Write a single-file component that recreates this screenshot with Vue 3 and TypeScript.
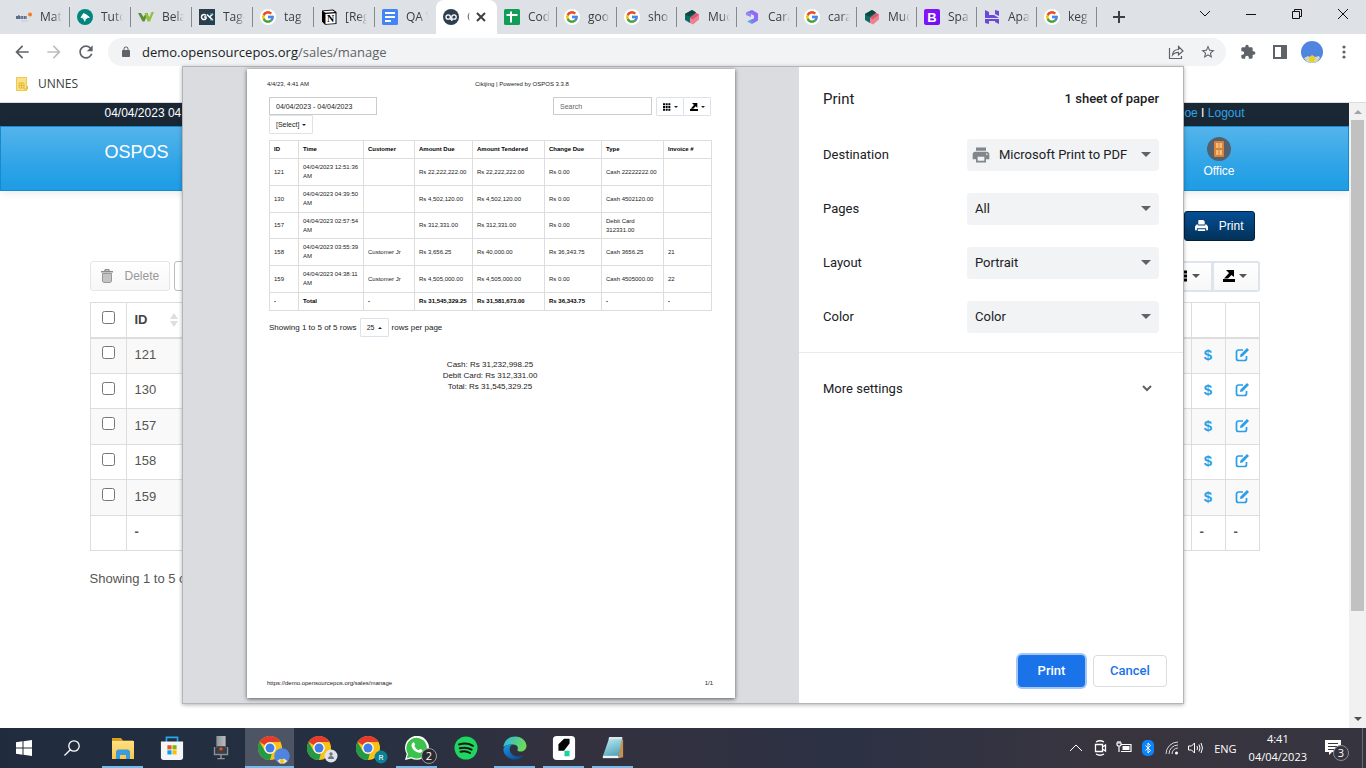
<script setup lang="ts">
import { ref } from 'vue'

interface Tab {
  icon: string
  title: string
  active?: boolean
}

interface Letter {
  text: string
  x: number
  y: number
  size: number
  font: string
  fill: string
  weight: number
}

interface Sale {
  id: number
  time: string
  customer: string
  due: string
  tendered: string
  change: string
  type: string
  invoice: string
}

interface App {
  icon: string
  name: string
  open: boolean
  current?: boolean
  badge?: string
}

const tabs: Tab[] = [
  { icon: 'f-elearn', title: 'Mat' },
  { icon: 'f-tuto', title: 'Tuto' },
  { icon: 'f-w', title: 'Bela' },
  { icon: 'f-gk', title: 'Tag-' },
  { icon: 'f-google', title: 'tag s' },
  { icon: 'f-notion', title: '[Reg' },
  { icon: 'f-docs', title: 'QA W' },
  { icon: 'f-op', title: 'C', active: true },
  { icon: 'f-sheets', title: 'Cod' },
  { icon: 'f-google', title: 'goo' },
  { icon: 'f-google', title: 'sho' },
  { icon: 'f-cubes', title: 'Mud' },
  { icon: 'f-swirl', title: 'Cara' },
  { icon: 'f-google', title: 'cara' },
  { icon: 'f-cubes', title: 'Mud' },
  { icon: 'f-boot', title: 'Spa' },
  { icon: 'f-host', title: 'Apa' },
  { icon: 'f-google', title: 'keg' },
]

const letters: Record<string, Letter> = {
  'f-notion': { text: 'N', x: 9.500, y: 13, size: 10, font: 'Liberation Serif', fill: '#000', weight: 700 },
  'f-boot': { text: 'B', x: 8, y: 12.500, size: 13, font: 'Liberation Sans', fill: '#fff', weight: 700 },
  'b-r': { text: 'R', x: 9, y: 12, size: 8, font: 'Roboto', fill: '#fff', weight: 400 },
  'b-two': { text: '2', x: 8, y: 12, size: 11, font: 'Open Sans', fill: '#fff', weight: 400 },
}

const sales: Sale[] = [
  { id: 121, time: '04/04/2023 12:51:36 AM', customer: '', due: 'Rs 22,222,222.00', tendered: 'Rs 22,222,222.00', change: 'Rs 0.00', type: 'Cash 22222222.00', invoice: '' },
  { id: 130, time: '04/04/2023 04:39:50 AM', customer: '', due: 'Rs 4,502,120.00', tendered: 'Rs 4,502,120.00', change: 'Rs 0.00', type: 'Cash 4502120.00', invoice: '' },
  { id: 157, time: '04/04/2023 02:57:54 AM', customer: '', due: 'Rs 312,331.00', tendered: 'Rs 312,331.00', change: 'Rs 0.00', type: 'Debit Card 312331.00', invoice: '' },
  { id: 158, time: '04/04/2023 03:55:39 AM', customer: 'Customer Jr', due: 'Rs 3,656.25', tendered: 'Rs 40,000.00', change: 'Rs 36,343.75', type: 'Cash 3656.25', invoice: '21' },
  { id: 159, time: '04/04/2023 04:38:11 AM', customer: 'Customer Jr', due: 'Rs 4,505,000.00', tendered: 'Rs 4,505,000.00', change: 'Rs 0.00', type: 'Cash 4505000.00', invoice: '22' },
]

const headings = ['ID', 'Time', 'Customer', 'Amount Due', 'Amount Tendered', 'Change Due', 'Type', 'Invoice #']
const totals = ['-', 'Total', '-', 'Rs 31,545,329.25', 'Rs 31,581,673.00', 'Rs 36,343.75', '-', '-']
const summary = ['Cash: Rs 31,232,998.25', 'Debit Card: Rs 312,331.00', 'Total: Rs 31,545,329.25']

const settings = [
  { id: 'destination', label: 'Destination', value: 'Microsoft Print to PDF', printer: true },
  { id: 'pages', label: 'Pages', value: 'All', printer: false },
  { id: 'layout', label: 'Layout', value: 'Portrait', printer: false },
  { id: 'color', label: 'Color', value: 'Color', printer: false },
]

const apps: App[] = [
  { icon: 't-folder', name: 'File Explorer', open: true },
  { icon: 't-store', name: 'Store', open: false },
  { icon: 't-mic', name: 'Voice', open: false },
  { icon: 't-chrome', name: 'Chrome', open: true, current: true, badge: 'b-photo' },
  { icon: 't-chrome', name: 'Chrome A', open: false, badge: 'b-a' },
  { icon: 't-chrome', name: 'Chrome R', open: false, badge: 'b-r' },
  { icon: 't-whatsapp', name: 'WhatsApp', open: true, badge: 'b-two' },
  { icon: 't-spotify', name: 'Spotify', open: false },
  { icon: 't-edge', name: 'Edge', open: true },
  { icon: 't-k', name: 'Editor', open: true },
  { icon: 't-note', name: 'Notepad', open: true },
]

const range = ref('04/04/2023 - 04/04/2023')
</script>

<template>
  <svg class="sprite" aria-hidden="true">
    <defs>
      <linearGradient id="gBoot" x1="0" y1="0" x2="1" y2="1">
        <stop offset="0" stop-color="#9013fe" /><stop offset="1" stop-color="#6610f2" />
      </linearGradient>
      <linearGradient id="gSwirl" x1="1" y1="0" x2="0" y2="1">
        <stop offset="0" stop-color="#a259ff" /><stop offset="0.6" stop-color="#7b7bf0" /><stop offset="1" stop-color="#2fe0ee" />
      </linearGradient>
      <linearGradient id="gEdge" x1="0" y1="0" x2="1" y2="0.3">
        <stop offset="0" stop-color="#2bb5e8" /><stop offset="1" stop-color="#6bdc5a" />
      </linearGradient>
      <linearGradient id="gEdge2" x1="0" y1="0" x2="0.6" y2="1">
        <stop offset="0" stop-color="#1b9de2" /><stop offset="1" stop-color="#0b4f9e" />
      </linearGradient>
      <linearGradient id="gFolder" x1="0" y1="0" x2="0" y2="1">
        <stop offset="0" stop-color="#ffe083" /><stop offset="1" stop-color="#f9c646" />
      </linearGradient>
      <linearGradient id="gNote" x1="0" y1="0" x2="0.4" y2="1">
        <stop offset="0" stop-color="#c3eef7" /><stop offset="1" stop-color="#5aa9bd" />
      </linearGradient>
      <linearGradient id="gMic" x1="0" y1="0" x2="1" y2="0">
        <stop offset="0" stop-color="#8f9499" /><stop offset="1" stop-color="#b9bdc1" />
      </linearGradient>
    </defs>
    <symbol id="f-elearn" viewBox="0 0 16 16">
      <path d="M0 8.500h11" stroke="#5b6c8c" stroke-width="3" stroke-dasharray="2 .6" />
      <path d="M2.800 6v4" stroke="#44587e" />
      <circle cx="14" cy="5.500" r="2" fill="#f47b20" /><path d="M5 12h7" stroke="#c5cad6" />
    </symbol>
    <symbol id="f-tuto" viewBox="0 0 16 16">
      <circle cx="8" cy="8" r="8" fill="#00857f" />
      <path d="M3.500 8.500 6.500 4l3 1.500 3.500 3-4 1-1 3.500-2-3.500z" fill="#fff" /><path d="M5 8l4 2 3-3" fill="none" stroke="#cde7e6" />
    </symbol>
    <symbol id="f-w" viewBox="0 0 16 16">
      <path d="M0 4h3l2.500 4L8 4h2l-3.500 8.500h-2z" fill="#5f8f35" />
      <path d="M6.500 4h2.500l2.500 4L13.500 3H16l-4 9.500H9.500z" fill="#93c13e" />
    </symbol>
    <symbol id="f-gk" viewBox="0 0 16 16">
      <rect width="16" height="16" fill="#2c3e4c" />
      <path d="M7 6.500A2.500 2.500 0 1 0 7 9.500V8H5M8 5.500l5 5M14 5l-3.500 3 3.500 3" fill="none" stroke="#fff" stroke-width="1.500" />
      <path d="M11 5h3M11 11h3" stroke="#2bc4f0" />
    </symbol>
    <symbol id="f-google" viewBox="0 0 48 48">
      <circle cx="24" cy="24" r="24" fill="#fff" />
      <g transform="translate(3 3) scale(.875)">
        <path fill="#fbbc05" d="M43.611 20.083H42V20H24v8h11.303c-1.649 4.657-6.080 8-11.303 8-6.627 0-12-5.373-12-12s5.373-12 12-12c3.059 0 5.842 1.154 7.961 3.039l5.657-5.657C34.046 6.053 29.268 4 24 4 12.955 4 4 12.955 4 24s8.955 20 20 20 20-8.955 20-20c0-1.341-.138-2.650-.389-3.917z" />
        <path fill="#ea4335" d="M6.306 14.691l6.571 4.819C14.655 15.108 18.961 12 24 12c3.059 0 5.842 1.154 7.961 3.039l5.657-5.657C34.046 6.053 29.268 4 24 4 16.318 4 9.656 8.337 6.306 14.691z" />
        <path fill="#34a853" d="M24 44c5.166 0 9.860-1.977 13.409-5.192l-6.190-5.238C29.211 35.091 26.715 36 24 36c-5.202 0-9.619-3.317-11.283-7.946l-6.522 5.025C9.505 39.556 16.227 44 24 44z" />
        <path fill="#4285f4" d="M43.611 20.083H42V20H24v8h11.303c-.792 2.237-2.231 4.166-4.087 5.571l6.190 5.238C36.971 39.205 44 34 44 24c0-1.341-.138-2.650-.389-3.917z" />
      </g>
    </symbol>
    <symbol id="f-notion" viewBox="0 0 16 16">
      <path d="M1 1.500 12 .5l3.500 2.500v12L4 15.700 1 12.500z" fill="#000" />
      <path d="M2 2.300 11.500 1.500 14 3 4.500 3.700zM4.500 5 14.500 4.300v10L4.500 14.900z" fill="#fff" />
    </symbol>
    <symbol id="f-docs" viewBox="0 0 16 16">
      <rect width="16" height="16" rx="1.500" fill="#4285f4" /><path d="M3 4h10M3 8h10M3 12h6" stroke="#fff" stroke-width="2" />
    </symbol>
    <symbol id="f-op" viewBox="0 0 16 16">
      <circle cx="8" cy="8" r="8" fill="#2c3e50" />
      <circle cx="5.200" cy="8" r="2.200" fill="none" stroke="#fff" stroke-width="1.300" />
      <path d="M8.800 12V8a2.200 2.200 0 1 1 2.200 2.200H7" fill="none" stroke="#fff" stroke-width="1.300" />
    </symbol>
    <symbol id="f-sheets" viewBox="0 0 16 16">
      <rect width="16" height="16" rx="1.500" fill="#0f9d58" /><path d="M2.500 6h11M7 2.500v11" stroke="#fff" stroke-width="2" />
    </symbol>
    <symbol id="f-cubes" viewBox="0 0 16 16">
      <path d="M1 5 8 1l4 2.500V9l-6 5-5-3z" fill="#0b6b62" /><path d="M1 5 8 1l4 2.500L5 7.500z" fill="#10463f" />
      <path d="M6 9l6-5 3 1.500v5L9 15.500 6 14z" fill="#ee8090" /><path d="M6 9l6-5 3 1.500L9 10.500z" fill="#d95b70" />
    </symbol>
    <symbol id="f-swirl" viewBox="0 0 16 16">
      <path d="M2 3.500 8 1l6 3.500v7L8 15l-5-2.500 3-1.500 4-1.500V6.500L7 5z" fill="url(#gSwirl)" />
      <path d="M2 3.500 7 5v3L2 6z" fill="#8f86f5" />
    </symbol>
    <symbol id="f-boot" viewBox="0 0 16 16">
      <rect width="16" height="16" rx="2" fill="url(#gBoot)" />
    </symbol>
    <symbol id="f-host" viewBox="0 0 16 16">
      <path d="M1 1l4 2v3h5l5 3H1zM11 1l4 1v5l-4-2zM1 10h14v5l-4-2v-1H5v3l-4-1z" fill="#6b48d6" />
    </symbol>
    <symbol id="i-back" viewBox="0 0 24 24"><path d="M20 11H7.830l5.590-5.590L12 4l-8 8 8 8 1.410-1.410L7.830 13H20z" /></symbol>
    <symbol id="i-fwd" viewBox="0 0 24 24"><path d="M12 4l-1.410 1.410L16.170 11H4v2h12.170l-5.580 5.590L12 20l8-8z" /></symbol>
    <symbol id="i-reload" viewBox="0 0 24 24"><path d="M17.650 6.350C16.200 4.900 14.210 4 12 4c-4.420 0-7.990 3.580-7.990 8s3.570 8 7.990 8c3.730 0 6.840-2.550 7.730-6h-2.080c-.82 2.330-3.040 4-5.650 4-3.310 0-6-2.690-6-6s2.690-6 6-6c1.660 0 3.140.69 4.220 1.780L13 11h7V4z" /></symbol>
    <symbol id="i-lock" viewBox="0 0 24 24"><path d="M18 8h-1V6c0-2.760-2.240-5-5-5S7 3.240 7 6v2H6c-1.100 0-2 .9-2 2v10c0 1.100.9 2 2 2h12c1.100 0 2-.9 2-2V10c0-1.100-.9-2-2-2zm-2.900 0H8.900V6c0-1.710 1.390-3.100 3.100-3.100s3.100 1.390 3.100 3.100z" /></symbol>
    <symbol id="i-share" viewBox="0 0 16 16"><path d="M1.500 4v10.500h12V12M4.500 11c.3-4 2.500-5.500 6-5.500V2.500L15 7l-4.500 4V8.300C8 8.300 6 9 4.500 11z" fill="none" stroke="#5f6368" stroke-width="1.200" /></symbol>
    <symbol id="i-star" viewBox="0 0 24 24"><path d="M22 9.240l-7.190-.62L12 2 9.190 8.630 2 9.240l5.460 4.730L5.820 21 12 17.270 18.180 21l-1.630-7.030zM12 15.400l-3.760 2.270 1-4.280-3.320-2.880 4.380-.38L12 6.100l1.710 4.040 4.380.38-3.320 2.880 1 4.280z" /></symbol>
    <symbol id="i-ext" viewBox="0 0 24 24"><path d="M20.500 11H19V7c0-1.100-.9-2-2-2h-4V3.500C13 2.120 11.880 1 10.500 1S8 2.120 8 3.500V5H4c-1.100 0-1.990.9-1.990 2v3.800H3.500c1.490 0 2.700 1.210 2.700 2.700s-1.210 2.700-2.700 2.700H2V20c0 1.100.9 2 2 2h3.800v-1.500c0-1.490 1.210-2.700 2.700-2.700s2.700 1.210 2.700 2.700V22H17c1.100 0 2-.9 2-2v-4h1.500c1.380 0 2.500-1.120 2.500-2.500S21.880 11 20.500 11z" /></symbol>
    <symbol id="i-print" viewBox="0 0 24 24"><path d="M19 8H5c-1.660 0-3 1.340-3 3v6h4v4h12v-4h4v-6c0-1.660-1.340-3-3-3zm-3 11H8v-5h8zm3-7c-.55 0-1-.45-1-1s.45-1 1-1 1 .45 1 1-.45 1-1 1zm-1-9H6v4h12z" /></symbol>
    <symbol id="i-printer" viewBox="0 0 14 13"><path d="M4 0h5l1.500 1.500V5h-7V1zM1.500 5H3v1h8V5h1.500L14 7v4h-2V9H2v2H0V7zM3 10h8v2H3z" /></symbol>
    <symbol id="i-caret" viewBox="0 0 10 5"><path d="M0 0h10L5 5z" /></symbol>
    <symbol id="i-grid" viewBox="0 0 12 11"><path d="M0 0h3v3H0zm4 0h3v3H4zm4 0h3v3H8zM0 4h3v3H0zm4 0h3v3H4zm4 0h3v3H8zM0 8h3v3H0zm4 0h3v3H4zm4 0h3v3H8z" /></symbol>
    <symbol id="i-export" viewBox="0 0 12 12"><path d="M0 9h12v3H0zM3 0h8v7L8.500 5 5 8.500H1L6 3z" /></symbol>
    <symbol id="i-trash" viewBox="0 0 12 14"><path d="M4 0h4l1 2h3v1.500H0V2h3zm.5 1.500V2h3v-.5z" fill="#8b8b8b" /><path d="M1.500 4.500h9v8l-1 1h-7l-1-1z" fill="#c4c4c4" stroke="#999" /></symbol>
    <symbol id="i-edit" viewBox="0 0 14 14"><path d="M8 2H3.500A2 2 0 0 0 1.500 4v6.500a2 2 0 0 0 2 2h6a2 2 0 0 0 2-2V8" fill="none" stroke="#2a9fe8" stroke-width="1.700" /><path d="M12 0l2 2-6.500 6.500L5 9l.5-2.500z" fill="#2a9fe8" /></symbol>
    <symbol id="t-folder" viewBox="0 0 24 24">
      <path d="M1 2h9l2 2.500h10V12H1z" fill="#d9a021" /><path d="M1 5h22v18H1z" fill="url(#gFolder)" />
      <path d="M5 15l2-1.500h10l2 1.500v8h-4v-4H9v4H5z" fill="#3a9be0" />
    </symbol>
    <symbol id="t-store" viewBox="0 0 24 26">
      <path d="M6 7V1.500h12V7" fill="none" stroke="#22a7f0" stroke-width="1.800" /><path d="M0 6h24v17q0 3-3 3H3q-3 0-3-3z" fill="#f4f6f8" />
      <path d="M7 10h4.500v4.500H7z" fill="#f25022" /><path d="M12.500 10H17v4.500h-4.500z" fill="#7fba00" />
      <path d="M7 15.500h4.500V20H7z" fill="#00a4ef" /><path d="M12.500 15.500H17V20h-4.500z" fill="#ffb900" />
    </symbol>
    <symbol id="t-mic" viewBox="0 0 24 26">
      <path d="M7 0h10v13H7z" fill="url(#gMic)" /><path d="M7 11h10v8H7z" fill="#3d3f43" /><circle cx="12" cy="14" r="1.800" fill="#e8511f" />
      <path d="M5 12v8h14v-8M12 20v4M8 24.500h8" fill="none" stroke="#8b9096" stroke-width="1.600" />
    </symbol>
    <symbol id="t-chrome" viewBox="0 0 24 24">
      <circle cx="12" cy="12" r="12" fill="#fbc116" />
      <path d="M1.600 6A12 12 0 0 1 22.400 6H12a6 6 0 0 0-5.200 3z" fill="#e33b2e" />
      <path d="M1.600 6 6.800 15a6 6 0 0 0 5.200 3l1.800-.3L12 24A12 12 0 0 1 1.600 6z" fill="#229a48" />
      <circle cx="12" cy="12" r="5.800" fill="#fff" /><circle cx="12" cy="12" r="4.500" fill="#3f7ee8" />
    </symbol>
    <symbol id="t-whatsapp" viewBox="0 0 24 24">
      <path d="M0 24l1.700-6A12 12 0 1 1 6.300 22.400z" fill="#fff" /><path d="M1.800 22.200 3 17.800A10.300 10.300 0 1 1 6.400 21z" fill="#3bc34b" />
      <path d="M8 6.500c1-.8 1.500-.2 2.200 2.300l-.8 1.400c1.200 2 2.400 3.100 4.400 4l1.300-1.300c2.500.9 2.800 1.200 2.200 2.300-1.200 1.800-3 2-5.500.9C9 15 7.300 12.500 6.600 10.500c-.5-1.500.3-3 1.400-4z" fill="#fff" />
    </symbol>
    <symbol id="t-spotify" viewBox="0 0 24 24">
      <circle cx="12" cy="12" r="11.500" fill="#1ed760" />
      <path d="M5 8.500c5-1.500 10-1 14 1.300M5.800 12.300c4.300-1.200 8.300-.7 11.800 1.300M6.500 15.800c3.700-.9 6.700-.5 9.500 1.200" fill="none" stroke="#191414" stroke-width="2" stroke-linecap="round" />
    </symbol>
    <symbol id="t-edge" viewBox="0 0 24 24">
      <path d="M.5 11C1 4.500 6 .5 12 .5c7 0 11.500 5 11.500 9.500 0 3.500-3 5.500-6 5.500-2.500 0-3.500-1-3-2 1.500-2.500-1-5-4.500-5C5.500 8.500 2 9.500.5 11z" fill="url(#gEdge)" />
      <path d="M.5 12.500C2 9 6 7.500 9.500 8.500c-3 1.500-3.500 5-2 8 2.500 4.500 8.500 5.500 13.500 2C18 23 13 24.500 8 23 3 21 0 17 .5 12.500z" fill="url(#gEdge2)" />
    </symbol>
    <symbol id="t-k" viewBox="0 0 24 26">
      <rect width="24" height="26" rx="4" fill="#fff" /><path d="M6 9l6-6h6v5l-6 8H6z" fill="#050505" /><path d="M12.500 16H18v6h-5.500z" fill="#19d3a2" />
    </symbol>
    <symbol id="t-note" viewBox="0 0 24 26">
      <path d="M20 3l3 1v19l-5 1z" fill="#c7904f" /><path d="M8 2h14l-4 20H1z" fill="url(#gNote)" /><path d="M1 21.500h17V24H1z" fill="#eef4f5" />
      <path d="M8 1h14v2.500H7z" fill="#dfe6e8" />
    </symbol>
    <symbol id="b-photo" viewBox="0 0 16 16">
      <circle cx="8" cy="8" r="7.800" fill="#4f85e0" /><path d="M3.500 12.500 6 11l2 .5 2-1 2 1.500 1.500 1-3 2.500H6z" fill="#efe6b0" /><circle cx="8" cy="13" r="2" fill="#f0c818" />
    </symbol>
    <symbol id="b-a" viewBox="0 0 16 16"><circle cx="8" cy="8" r="6.500" fill="#dfe3e8" /><circle cx="8" cy="6" r="1.700" fill="#6f7680" /><path d="M5 11q0-3 3-3t3 3z" fill="#6f7680" /></symbol>
    <symbol id="b-r" viewBox="0 0 16 16"><circle cx="9" cy="9" r="6.500" fill="#0b8294" /></symbol>
    <symbol id="b-two" viewBox="0 0 16 16"><circle cx="8" cy="8" r="7.500" fill="#2b2b2f" stroke="#9a9aa0" /></symbol>
  </svg>

  <div class="screen">
    <header class="tabstrip">
      <nav class="tabs" aria-label="Tabs">
        <button v-for="(tab, i) in tabs" :key="i" type="button" class="tab" :class="{ wide: i < 8, active: tab.active, quiet: i === 6 }">
          <svg class="fav" viewBox="0 0 16 16">
            <use :href="'#' + tab.icon" />
            <text v-if="letters[tab.icon]" :x="letters[tab.icon].x" :y="letters[tab.icon].y" :font-size="letters[tab.icon].size" :font-family="letters[tab.icon].font" :font-weight="letters[tab.icon].weight" :fill="letters[tab.icon].fill" text-anchor="middle">{{ letters[tab.icon].text }}</text>
          </svg>
          <span class="tab-title">{{ tab.title }}</span>
          <svg v-if="tab.active" class="tab-close" viewBox="0 0 10 10"><path d="M1 1l8 8M9 1L1 9" /></svg>
        </button>
        <button type="button" class="new-tab" aria-label="New tab">
          <svg viewBox="0 0 12 12"><path d="M6 0v12M0 6h12" /></svg>
        </button>
      </nav>
      <div class="win-controls">
        <button type="button" aria-label="Search tabs"><svg viewBox="0 0 12 12"><path d="M1 3l5 5 5-5" /></svg></button>
        <button type="button" aria-label="Minimize"><svg viewBox="0 0 12 12"><path d="M1 6.500h10" /></svg></button>
        <button type="button" aria-label="Restore"><svg viewBox="0 0 12 12"><path d="M1.500 3.500h7v7h-7zM3.500 3.500v-2h7v7h-2" /></svg></button>
        <button type="button" aria-label="Close"><svg viewBox="0 0 12 12"><path d="M1 1l10 10M11 1L1 11" /></svg></button>
      </div>
    </header>

    <div class="toolbar">
      <button type="button" class="tool" aria-label="Back"><svg><use href="#i-back" /></svg></button>
      <button type="button" class="tool faded" aria-label="Forward"><svg><use href="#i-fwd" /></svg></button>
      <button type="button" class="tool" aria-label="Reload"><svg><use href="#i-reload" /></svg></button>
      <div class="omnibox">
        <svg class="lock"><use href="#i-lock" /></svg>
        <span class="url">demo.opensourcepos.org<span>/sales/manage</span></span>
        <button type="button" class="tool small" aria-label="Share"><svg><use href="#i-share" /></svg></button>
        <button type="button" class="tool small" aria-label="Bookmark"><svg><use href="#i-star" /></svg></button>
      </div>
      <button type="button" class="tool mid" aria-label="Extensions"><svg><use href="#i-ext" /></svg></button>
      <button type="button" class="tool mid" aria-label="Side panel"><svg viewBox="0 0 16 16"><path d="M1 1h14v14H1zm2 2v10h6V3z" fill-rule="evenodd" /></svg></button>
      <button type="button" class="tool photo" aria-label="Profile">
        <svg viewBox="0 0 22 22"><circle cx="11" cy="11" r="11" fill="#4f85e0" /><path d="M3 17l4-2 2 1 2-2 3 2 4-1 1 2-3 4-5 1-5-1z" fill="#cfd9b8" /><circle cx="11" cy="18" r="3" fill="#f0cf1c" /></svg>
      </button>
      <button type="button" class="tool mid" aria-label="Menu"><svg viewBox="0 0 16 16"><circle cx="8" cy="3" r="1.600" /><circle cx="8" cy="8" r="1.600" /><circle cx="8" cy="13" r="1.600" /></svg></button>
    </div>

    <div class="bookmarks">
      <a href="#"><svg viewBox="0 0 12 14"><path d="M0 0h11v14H0z" fill="#f9e08a" /><path d="M.5.500h10v13H.500z" fill="none" stroke="#efc94c" /><path d="M3 6h5v5H3zM5.500 6v5M3 8.500h5M8 12h3.500V9" fill="none" stroke="#e3b930" /></svg>UNNES</a>
    </div>

    <div class="viewport">
      <main class="site">
        <div class="topbar">
          <div class="container inset"><span>04/04/2023 04:41</span><span><a href="#">John Doe</a> I <a href="#">Logout</a></span></div>
        </div>
        <div class="navbar">
          <div class="container inset">
            <a href="#" class="brand">OSPOS</a>
            <a href="#" class="module">
              <svg viewBox="0 0 24 24"><circle cx="12" cy="12" r="12" fill="#55606e" /><rect x="7" y="4" width="10" height="16" rx="1" fill="#d9823b" /><path d="M9 6h2.500v5H9zm3.500 0H15v5h-2.500zM9 13h2.500v5H9zm3.500 0H15v5h-2.500z" fill="#f6bd77" /></svg>
              Office
            </a>
          </div>
        </div>
        <div class="container">
          <div class="actions"><button type="button" class="btn-primary"><svg><use href="#i-printer" /></svg>Print</button></div>
          <div class="filters">
            <button type="button" class="btn-delete" disabled><svg><use href="#i-trash" /></svg>Delete</button>
            <input class="range" type="text" aria-label="Date range" />
            <div class="group">
              <button type="button" aria-label="Columns"><svg class="glyph"><use href="#i-grid" /></svg><svg class="caret"><use href="#i-caret" /></svg></button>
              <button type="button" aria-label="Export"><svg class="glyph"><use href="#i-export" /></svg><svg class="caret"><use href="#i-caret" /></svg></button>
            </div>
          </div>
          <table class="sales">
            <colgroup><col class="c-check" /><col class="c-id" /><col /><col class="c-icon" /><col class="c-icon" /></colgroup>
            <thead>
              <tr>
                <th><input type="checkbox" aria-label="Select all" /></th>
                <th><span class="sort">ID<svg viewBox="0 0 8 14"><path d="M4 0l4 6H0zM0 8h8l-4 6z" /></svg></span></th>
                <th></th><th></th><th></th>
              </tr>
            </thead>
            <tbody>
              <tr v-for="sale in sales" :key="sale.id">
                <td><input type="checkbox" :aria-label="'Select ' + sale.id" /></td>
                <td>{{ sale.id }}</td>
                <td></td>
                <td class="mark"><a href="#" class="dollar">$</a></td>
                <td class="mark"><a href="#" aria-label="Edit"><svg><use href="#i-edit" /></svg></a></td>
              </tr>
              <tr class="sum"><td></td><td>-</td><td></td><td>-</td><td>-</td></tr>
            </tbody>
          </table>
          <p class="rows-info">Showing 1 to 5 of 5 rows</p>
        </div>
      </main>
      <div class="scrollbar">
        <svg class="up" viewBox="0 0 8 4"><path d="M0 4l4-4 4 4z" /></svg>
        <div class="track"><div class="thumb"></div></div>
        <svg class="down" viewBox="0 0 8 4"><path d="M0 0h8L4 4z" /></svg>
      </div>
    </div>

    <div class="overlay">
      <section class="dialog" role="dialog" aria-label="Print">
        <div class="preview">
          <article class="paper">
            <div class="paper-head"><span>4/4/23, 4:41 AM</span><span>Cikijing | Powered by OSPOS 3.3.8</span></div>
            <div class="paper-body">
              <div class="paper-tools">
                <div class="stack">
                  <input v-model="range" class="p-input" type="text" aria-label="Printed date range" />
                  <button type="button" class="p-btn">[Select]<svg class="p-caret"><use href="#i-caret" /></svg></button>
                </div>
                <div class="p-right">
                  <input class="p-input search" type="text" placeholder="Search" aria-label="Search" />
                  <div class="p-group">
                    <button type="button" class="p-btn" aria-label="Printed columns"><svg class="p-glyph"><use href="#i-grid" /></svg><svg class="p-caret"><use href="#i-caret" /></svg></button>
                    <button type="button" class="p-btn" aria-label="Printed export"><svg class="p-glyph"><use href="#i-export" /></svg><svg class="p-caret"><use href="#i-caret" /></svg></button>
                  </div>
                </div>
              </div>
              <table class="report">
                <colgroup><col class="r1" /><col class="r2" /><col class="r3" /><col class="r4" /><col class="r5" /><col class="r6" /><col class="r7" /><col class="r8" /></colgroup>
                <thead><tr><th v-for="h in headings" :key="h">{{ h }}</th></tr></thead>
                <tbody>
                  <tr v-for="s in sales" :key="s.id">
                    <td>{{ s.id }}</td><td>{{ s.time }}</td><td>{{ s.customer }}</td><td>{{ s.due }}</td>
                    <td>{{ s.tendered }}</td><td>{{ s.change }}</td><td>{{ s.type }}</td><td>{{ s.invoice }}</td>
                  </tr>
                </tbody>
                <tfoot><tr><td v-for="(t, i) in totals" :key="i">{{ t }}</td></tr></tfoot>
              </table>
              <div class="paging">
                <span>Showing 1 to 5 of 5 rows</span>
                <button type="button" class="p-btn">25<svg class="p-caret flip"><use href="#i-caret" /></svg></button>
                <span>rows per page</span>
              </div>
              <div class="summary"><div v-for="line in summary" :key="line">{{ line }}</div></div>
            </div>
            <div class="paper-foot"><span>https://demo.opensourcepos.org/sales/manage</span><span>1/1</span></div>
          </article>
        </div>
        <div class="panel">
          <div class="panel-head"><h1>Print</h1><span>1 sheet of paper</span></div>
          <div class="settings">
            <div v-for="s in settings" :key="s.id" class="setting">
              <label :for="s.id">{{ s.label }}</label>
              <div class="picker" :class="{ printer: s.printer }">
                <svg v-if="s.printer" class="printer-icon"><use href="#i-print" /></svg>
                <select :id="s.id"><option>{{ s.value }}</option></select>
                <svg class="arrow"><use href="#i-caret" /></svg>
              </div>
            </div>
          </div>
          <button type="button" class="more">More settings<svg viewBox="0 0 10 7"><path d="M1 1l4 4 4-4" /></svg></button>
          <div class="panel-foot">
            <button type="button" class="go">Print</button>
            <button type="button" class="cancel">Cancel</button>
          </div>
        </div>
      </section>
    </div>

    <footer class="taskbar">
      <div class="system">
        <button type="button" class="task" aria-label="Start"><svg class="ico16" viewBox="0 0 16 16"><path d="M0 2.200 6.500 1.300v6.200H0zM7.500 1.200 16 0v7.500H7.500zM0 8.500h6.500v6.200L0 13.800zM7.500 8.500H16V16l-8.500-1.200z" fill="#fff" /></svg></button>
        <button type="button" class="task" aria-label="Search"><svg class="ico16" viewBox="0 0 16 16"><circle cx="10" cy="6" r="5.200" fill="none" stroke="#fff" stroke-width="1.300" /><path d="M6.300 9.700 0.500 15.500" stroke="#fff" stroke-width="1.300" /></svg></button>
      </div>
      <button v-for="app in apps" :key="app.name" type="button" class="task" :class="{ open: app.open, current: app.current }" :aria-label="app.name">
        <svg class="ico24"><use :href="'#' + app.icon" /></svg>
        <svg v-if="app.badge" class="badge" viewBox="0 0 16 16">
          <use :href="'#' + app.badge" />
          <text v-if="letters[app.badge]" :x="letters[app.badge].x" :y="letters[app.badge].y" :font-size="letters[app.badge].size" :font-family="letters[app.badge].font" :font-weight="letters[app.badge].weight" :fill="letters[app.badge].fill" text-anchor="middle">{{ letters[app.badge].text }}</text>
        </svg>
      </button>
      <div class="tray">
        <svg viewBox="0 0 16 16"><path d="M2 11l6-6 6 6" /></svg>
        <svg viewBox="0 0 16 16"><path d="M3.500 4.500h7v7h-7zM10.500 7l3-2v6l-3-2M4 2q4-2.500 8 0M4 14q4 2.500 8 0" stroke-width="1.300" /></svg>
        <svg viewBox="0 0 16 16"><path d="M5.500 4.500H15v7H5M2 1v2M4 1v2M1 3h4v2L4 6H2L1 5zM3 6v6" stroke-width="1.200" /><path d="M6.500 6h7v4h-7z" fill="#fff" stroke="none" /></svg>
        <svg viewBox="0 0 16 16"><rect x="2" y="0" width="12" height="16" rx="5" fill="#0a84ff" stroke="none" /><path d="M5.500 5.500l5 5L8 13V3l2.500 2.500-5 5" /></svg>
        <svg viewBox="0 0 16 16"><path d="M2 14A12 12 0 0 1 14 2M5 14a9 9 0 0 1 9-9M8 14a6 6 0 0 1 6-6" stroke="#d8d8dc" /><circle cx="12.500" cy="13" r="1.500" fill="#fff" stroke="none" /></svg>
        <svg viewBox="0 0 16 16"><path d="M.5 6h3l3-3v10l-3-3h-3zM9 6q1 2 0 4M11 4.500q2 3.500 0 7M13 3q3 5 0 10" /></svg>
        <span class="lang">ENG</span>
        <div class="clock"><span>4:41</span><span>04/04/2023</span></div>
        <div class="notice"><svg viewBox="0 0 16 16"><path d="M0 0h16v12H7l-3 3v-3H0z" fill="#fff" stroke="none" /><path d="M3 3.500h10M3 6.500h10M3 9.500h6" stroke="#37353f" /></svg><span>3</span></div>
        <i class="peek"></i>
      </div>
    </footer>
  </div>
</template>

<style>
body { margin: 0; background: #fff; }
*, *::before, *::after { box-sizing: border-box; }
button, input, select { font: inherit; color: inherit; margin: 0; }
button { background: none; border: 0; padding: 0; }
a { text-decoration: none; color: inherit; }
</style>

<style scoped>
.sprite { position: absolute; width: 0; height: 0; }
.screen { position: relative; display: flex; flex-direction: column; min-height: 100vh; overflow: hidden; font-family: "Open Sans", "Noto Sans", sans-serif; font-size: 12px; color: #3c4043; }
svg { display: block; flex: none; }

.tabstrip { display: flex; justify-content: space-between; height: 34px; background: #dee1e6; }
.tabs { display: flex; padding-left: 9px; }
.tab { display: flex; align-items: center; gap: 8px; width: 60px; padding-left: 7px; position: relative; text-align: left; }
.tab.wide { width: 61px; }
.tab::after { content: ""; position: absolute; right: 0; top: 7px; width: 1px; height: 20px; background: #85898e; }
.tab.active { background: #fff; border-radius: 8px 8px 0 0; gap: 6px; }
.tab.active::after, .tab.quiet::after { display: none; }
.fav { width: 16px; height: 16px; }
.tab-title { width: 22px; overflow: hidden; white-space: nowrap; line-height: 18px; mask-image: linear-gradient(90deg, #000 60%, transparent); }
.tab.active .tab-title { width: 5px; padding-left: 2px; }
.tab-close { width: 10px; height: 10px; stroke: #3c4043; stroke-width: 2; }
.new-tab { width: 28px; display: grid; place-items: center; margin-left: 8px; }
.new-tab svg { width: 12px; height: 12px; stroke: #3c4043; stroke-width: 2; }
.win-controls { display: flex; }
.win-controls button { width: 46px; height: 28px; display: grid; place-items: center; }
.win-controls svg { width: 12px; height: 12px; fill: none; stroke: #111; }

.toolbar { display: flex; align-items: center; height: 36px; padding: 0 6px; background: #fff; }
.tool { width: 32px; height: 28px; display: grid; place-items: center; }
.tool svg { width: 20px; height: 20px; fill: #5f6368; }
.tool.faded svg { fill: #bcbec1; }
.tool.small svg { width: 16px; height: 16px; }
.tool.mid svg { width: 16px; height: 16px; }
.tool.photo svg { width: 22px; height: 22px; }
.omnibox { flex: 1; display: flex; align-items: center; height: 28px; margin: 0 6px; padding: 0 2px 0 12px; border-radius: 14px; background: #f1f3f4; }
.lock { width: 12px; height: 12px; fill: #5f6368; margin-right: 10px; }
.url { flex: 1; font-size: 13px; color: #202124; }
.url span { color: #5f6368; }
.bookmarks { height: 33px; display: flex; align-items: center; padding: 0 16px 5px; border-bottom: 1px solid #dadce0; }
.bookmarks a { display: flex; align-items: center; gap: 10px; }
.bookmarks svg { width: 12px; height: 14px; }

.viewport { flex: 1; display: flex; font-family: "Liberation Sans", Arial, sans-serif; font-size: 13px; color: #555; }
.site { flex: 1; }
.container { max-width: 1170px; margin: 0 auto; }
.inset { display: flex; justify-content: space-between; padding: 0 15px; }
.topbar { height: 23px; background: #1a2735; color: #fff; font-size: 12px; line-height: 20px; }
.topbar a { color: #2fa4e7; }
.navbar { height: 65px; border: 1px solid #178acc; background: linear-gradient(#54b4eb, #2fa4e7 60%, #1d9ce5); box-shadow: 0 1px 10px rgba(0, 0, 0, 0.1); color: #fff; }
.brand { font-size: 18px; line-height: 50px; }
.module { display: flex; flex-direction: column; align-items: center; gap: 2px; padding: 10px 10px 0 0; font-size: 12px; line-height: 16px; }
.module svg { width: 24px; height: 24px; }
.actions { display: flex; justify-content: flex-end; padding: 20px 5px 0 0; }
.btn-primary { display: flex; align-items: center; gap: 11px; height: 30px; padding: 0 10px; border: 1px solid #02213f; border-radius: 3px; background: linear-gradient(#044e95, #033258); color: #fff; font-size: 12px; }
.btn-primary svg { width: 13px; height: 12px; fill: #fff; }
.filters { display: flex; align-items: center; gap: 4px; margin: 20px 0 11px; height: 30px; }
.btn-delete { display: flex; align-items: center; gap: 12px; height: 30px; padding: 0 10px; border: 1px solid #e6e6e6; border-radius: 3px; background: linear-gradient(#fff, #f7f7f7); color: #999; font-size: 12px; }
.btn-delete svg { width: 12px; height: 14px; }
.range { width: 200px; height: 30px; border: 1px solid #bbb; border-radius: 3px; }
.group { display: flex; margin-left: auto; }
.group button { display: flex; align-items: center; gap: 4px; width: 48px; height: 31px; padding-left: 9px; border: 2px solid #dde4ec; background: linear-gradient(#fff, #f7f7f7); }
.group button + button { margin-left: -1px; border-radius: 0 3px 3px 0; }
.glyph { width: 12px; height: 12px; fill: #000; }
.caret { width: 8px; height: 4px; fill: #555; }
.sales { width: 100%; border-collapse: collapse; table-layout: fixed; line-height: 18px; }
.c-check { width: 36px; }
.c-id { width: 60px; }
.c-icon { width: 34px; }
.sales th, .sales td { height: 36px; padding: 6px 8px 8px; border: 1px solid #ddd; text-align: left; vertical-align: middle; }
.sales th { height: 35px; padding: 6px 8px; border-bottom: 2px solid #ddd; color: #444; }
.sales tbody tr:nth-child(odd) { background: #f9f9f9; }
.sales tbody tr:nth-child(even) td { height: 35px; }
.sales input { display: block; width: 13px; height: 13px; margin: 0 0 4px 3px; }
.sort { display: flex; justify-content: space-between; align-items: center; }
.sort svg { width: 8px; height: 14px; fill: #ddd; }
.mark a { display: grid; place-items: center; color: #2a9fe8; }
.mark svg { width: 14px; height: 14px; }
.dollar { font-size: 15px; font-weight: 700; }
.sales .sum { font-weight: 700; background: #fff; }
.rows-info { margin: 18px 0 0; line-height: 20px; }
.scrollbar { width: 17px; display: flex; flex-direction: column; align-items: center; padding: 7px 0; background: #f1f1f1; }
.scrollbar svg { width: 8px; height: 4px; }
.up { fill: #a3a3a3; }
.down { fill: #505050; }
.track { flex: 1; width: 13px; margin: 6px 0; }
.thumb { height: 83%; background: #c1c1c1; }

.overlay { position: absolute; top: 66px; right: 0; bottom: 64px; left: 0; display: flex; justify-content: center; }
.dialog { display: flex; width: 1002px; max-width: 100%; border: 1px solid #b4b5b9; background: #fff; box-shadow: 0 1px 4px rgba(0, 0, 0, 0.3); font-family: Roboto, sans-serif; font-size: 13px; color: #202124; }
.preview { flex: 1; display: flex; justify-content: center; padding: 2px 0 5px; background: #dadce0; }
.paper { display: flex; flex-direction: column; width: 488px; padding: 10px 22px 10px 20px; background: #fff; box-shadow: 0 1px 4px rgba(0, 0, 0, 0.6); font-family: "Liberation Sans", Arial, sans-serif; font-size: 6px; line-height: 10px; color: #222; }
.paper-head { display: grid; grid-template-columns: 208px 1fr; }
.paper-foot { display: flex; justify-content: space-between; }
.paper-body { flex: 1; padding: 8px 2px 0; }
.paper-tools { display: flex; justify-content: space-between; align-items: flex-start; font-size: 7px; }
.stack { display: flex; flex-direction: column; align-items: flex-start; }
.p-input { width: 108px; height: 18px; padding: 0 6px; border: 1px solid #ccc; border-radius: 0; line-height: 10px; }
.search { width: 99px; }
.search::placeholder { color: #666; }
.p-right { display: flex; gap: 4px; }
.p-group { display: flex; }
.p-group .p-btn { width: 28px; }
.p-group .p-btn + .p-btn { margin-left: -1px; }
.p-btn { display: flex; align-items: center; justify-content: center; gap: 3px; height: 19px; padding: 0 6px; border: 1px solid #dbe2ea; border-radius: 1px; color: #222; }
.p-caret { width: 4px; height: 2px; fill: #222; }
.p-glyph { width: 8px; height: 8px; fill: #000; }
.flip { transform: rotate(180deg); }
.report { width: 443px; margin-top: 6px; border-collapse: collapse; table-layout: fixed; line-height: 9px; }
.report th, .report td { height: 27px; padding: 0 4px; border: 1px solid #ddd; text-align: left; vertical-align: middle; }
.report tbody tr:nth-child(3) td { height: 26px; }
.report th, .report tfoot td { height: 18px; font-weight: 700; white-space: nowrap; color: #000; }
.r1 { width: 29px; }
.r2 { width: 65px; }
.r3 { width: 51px; }
.r4 { width: 58px; }
.r5 { width: 72px; }
.r6 { width: 57px; }
.r7 { width: 62px; }
.paging { display: flex; align-items: center; gap: 3px; margin-top: 7px; font-size: 8px; }
.paging .p-btn { width: 29px; font-size: 7px; }
.summary { margin-top: 22px; font-size: 8px; line-height: 11px; text-align: center; }

.panel { display: flex; flex-direction: column; width: 384px; }
.panel-head { display: flex; justify-content: space-between; align-items: center; height: 64px; padding: 0 24px; }
.panel-head h1 { margin: 0; font-size: 15px; font-weight: 400; }
.panel-head span { padding-bottom: 2px; font-weight: 500; }
.settings { display: flex; flex-direction: column; gap: 22px; padding: 8px 24px 19px; border-bottom: 1px solid #e8eaed; }
.setting { display: flex; align-items: center; justify-content: space-between; }
.setting label { padding-bottom: 2px; }
.picker { position: relative; width: 192px; }
.picker select { display: block; width: 100%; height: 32px; padding: 0 28px 2px 8px; border: 0; border-radius: 4px; background: #f1f3f4; appearance: none; }
.picker.printer select { padding-left: 32px; }
.printer-icon { position: absolute; left: 4px; top: 6px; width: 20px; height: 20px; fill: #80868b; }
.arrow { position: absolute; right: 8px; top: 13px; width: 10px; height: 5px; fill: #5f6368; }
.more { display: flex; align-items: center; justify-content: space-between; height: 72px; padding: 0 31px 2px 24px; }
.more svg { width: 10px; height: 7px; fill: none; stroke: #5f6368; stroke-width: 2; }
.panel-foot { display: flex; justify-content: flex-end; gap: 8px; margin-top: auto; padding: 16px; }
.panel-foot button { height: 32px; padding-bottom: 2px; border-radius: 4px; font-weight: 500; }
.go { width: 67px; background: #1a73e8; color: #fff; box-shadow: 0 0 0 2px #a3c7f7; }
.cancel { width: 74px; border: 1px solid #dadce0; color: #1a73e8; }

.taskbar { display: flex; height: 40px; background: linear-gradient(90deg, #202b3d, #253042 25%, #34313e 42%, #2c3144 62%, #38353f 80%, #36343e); color: #fff; font-size: 11px; }
.system { display: flex; width: 98px; }
.task { position: relative; width: 49px; display: grid; place-items: center; }
.system .task { width: 48px; }
.task.open::after { content: ""; position: absolute; left: 4px; right: 4px; bottom: 0; height: 2px; background: #76b9ed; }
.task.current { background: #4d5564; }
.task.current::after { left: 0; right: 0; }
.ico16 { width: 16px; height: 16px; }
.ico24 { width: 24px; height: 24px; }
.badge { position: absolute; right: 4px; bottom: 4px; width: 16px; height: 16px; }
.tray { display: flex; align-items: center; gap: 8px; margin-left: auto; }
.tray svg { width: 16px; height: 16px; fill: none; stroke: #fff; }
.lang { margin-left: 2px; }
.clock { display: flex; flex-direction: column; align-items: center; margin-left: 4px; line-height: 18px; }
.notice { position: relative; margin: 0 5px 0 10px; padding-right: 8px; }
.notice span { position: absolute; right: 0; top: 5px; width: 16px; height: 16px; border: 1px solid #8d8c93; border-radius: 50%; background: #37353f; text-align: center; line-height: 14px; }
.peek { width: 4px; height: 40px; border-left: 1px solid #6b6a72; }
</style>
